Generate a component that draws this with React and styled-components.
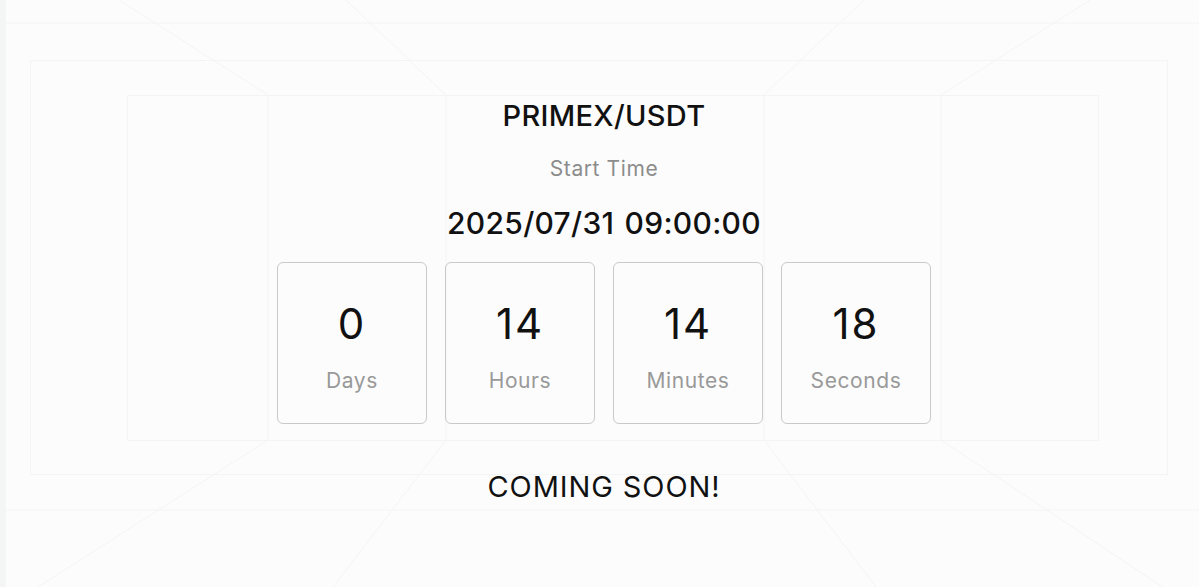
import React from "react";
import styled, { createGlobalStyle } from "styled-components";

const Global = createGlobalStyle`
  html, body { margin: 0; padding: 0; background: #fcfcfc; }
  body { font-family: "Inter", "Noto Sans", sans-serif; color: #111; }
`;

const Page = styled.div`
  position: relative;
  width: 100%;
  min-height: 587px;
  overflow: hidden;
  background: #fcfcfc;
`;

const Backdrop = styled.svg`
  position: absolute;
  left: 0;
  top: 0;
  width: 1199px;
  height: 587px;
  pointer-events: none;
`;

const Content = styled.main`
  position: relative;
  display: flex;
  flex-direction: column;
  align-items: center;
  padding-top: 96px;
  padding-left: 9px;
`;

const Title = styled.h1`
  margin: 0;
  font-size: 29px;
  line-height: 40px;
  font-weight: 500;
  color: #111;
  letter-spacing: 0.3px;
`;

const Label = styled.div`
  margin-top: 18px;
  font-size: 21px;
  line-height: 30px;
  color: #8c8c8c;
  letter-spacing: 0.6px;
`;

const DateText = styled.div`
  margin-top: 21px;
  font-size: 30px;
  line-height: 36px;
  font-weight: 500;
  color: #111;
  letter-spacing: 0.3px;
  word-spacing: 2px;
`;

const Boxes = styled.div`
  margin-top: 21px;
  display: flex;
  gap: 18px;
`;

const Box = styled.div`
  width: 148px;
  height: 160px;
  border: 1px solid #c9c9c9;
  border-radius: 6px;
  display: flex;
  flex-direction: column;
  align-items: center;
`;

const Num = styled.div`
  margin-top: 36px;
  font-size: 42px;
  line-height: 50px;
  color: #111;
  letter-spacing: 2px;
`;

const Unit = styled.div`
  margin-top: 17px;
  font-size: 21px;
  line-height: 30px;
  color: #999;
  letter-spacing: 0.6px;
`;

const Soon = styled.div`
  margin-top: 43px;
  font-size: 29px;
  line-height: 40px;
  color: #111;
  letter-spacing: 0.9px;
`;

const lines = [
  [6, 23, 1199, 23],
  [6, 510, 1199, 510],
  [268, 95, 268, 440],
  [446, 95, 446, 440],
  [764, 95, 764, 440],
  [941, 95, 941, 440],
  [119, 0, 268, 95],
  [346, 0, 446, 95],
  [864, 0, 764, 95],
  [1090, 0, 941, 95],
  [268, 440, 38, 587],
  [446, 440, 333, 587],
  [764, 440, 876, 587],
  [941, 440, 1163, 587],
];

const units = [
  ["0", "Days"],
  ["14", "Hours"],
  ["14", "Minutes"],
  ["18", "Seconds"],
];

export default function App() {
  return (
    <Page>
      <Global />
      <Backdrop viewBox="0 0 1199 587">
        <rect x="0" y="0" width="6" height="587" fill="#f4f6f6" />
        <g stroke="#f3f4f4" strokeWidth="1" fill="none">
          <rect x="30.5" y="60.5" width="1137" height="414" />
          <rect x="127.5" y="95.5" width="971" height="345" />
          {lines.map(([a, b, c, d], i) => (
            <line key={i} x1={a} y1={b} x2={c} y2={d} />
          ))}
        </g>
      </Backdrop>
      <Content>
        <Title>PRIMEX/USDT</Title>
        <Label>Start Time</Label>
        <DateText>2025/07/31 09:00:00</DateText>
        <Boxes>
          {units.map(([n, u]) => (
            <Box key={u}>
              <Num>{n}</Num>
              <Unit>{u}</Unit>
            </Box>
          ))}
        </Boxes>
        <Soon>COMING SOON!</Soon>
      </Content>
    </Page>
  );
}
